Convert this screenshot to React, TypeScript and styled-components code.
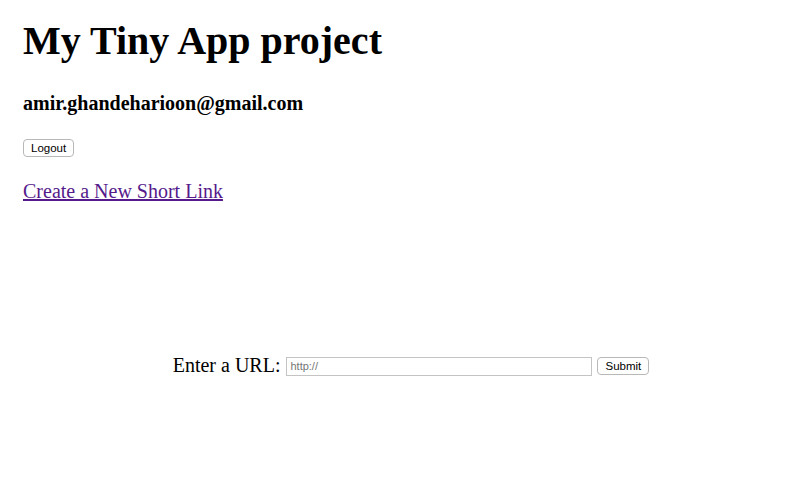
import React from "react";
import styled, { createGlobalStyle } from "styled-components";

const Global = createGlobalStyle`
  body { margin: 8px 8px 8px 23px; font-family: "Liberation Serif", "Times New Roman", serif; color: #000; background: #fff; }
`;

const Title = styled.h1`
  font-size: 40px;
  font-weight: bold;
  margin: 11px 0 0;
  line-height: 44px;
`;

const Email = styled.h3`
  font-size: 20px;
  font-weight: bold;
  margin: 29px 0 0;
  line-height: 22px;
`;

const SmallButton = styled.button`
  font-family: "Liberation Sans", Arial, sans-serif;
  font-size: 11.5px;
  height: 18px;
  padding: 0 7px;
  background: #fff;
  border: 1px solid #b8b8b8;
  border-radius: 4px;
  color: #000;
  line-height: 16px;
`;

const LogoutRow = styled.div`
  margin-top: 24px;
  height: 18px;
`;

const NewLink = styled.a`
  display: inline-block;
  margin-top: 24px;
  font-size: 20px;
  line-height: 22px;
  color: #551a8b;
  text-decoration: underline;
`;

const Form = styled.form`
  display: flex;
  justify-content: center;
  align-items: center;
  gap: 5px;
  margin-top: 153px;
  padding-left: 6px;
`;

const Label = styled.label`
  font-size: 20px;
  line-height: 22px;
  margin-right: 1px;
  position: relative;
  top: -1px;
`;

const UrlInput = styled.input`
  width: 306px;
  height: 19px;
  box-sizing: border-box;
  border: 1px solid #c4c4c4;
  padding: 0 3px;
  font-family: "Liberation Sans", Arial, sans-serif;
  font-size: 11px;
  &::placeholder { color: #757575; }
`;

export default function App() {
  return (
    <>
      <Global />
      <Title>My Tiny App project</Title>
      <Email>amir.ghandeharioon@gmail.com</Email>
      <LogoutRow>
        <SmallButton type="button">Logout</SmallButton>
      </LogoutRow>
      <NewLink href="#">Create a New Short Link</NewLink>
      <Form onSubmit={(e) => e.preventDefault()}>
        <Label>Enter a URL:</Label>
        <UrlInput type="text" placeholder="http://" />
        <SmallButton type="submit">Submit</SmallButton>
      </Form>
    </>
  );
}
